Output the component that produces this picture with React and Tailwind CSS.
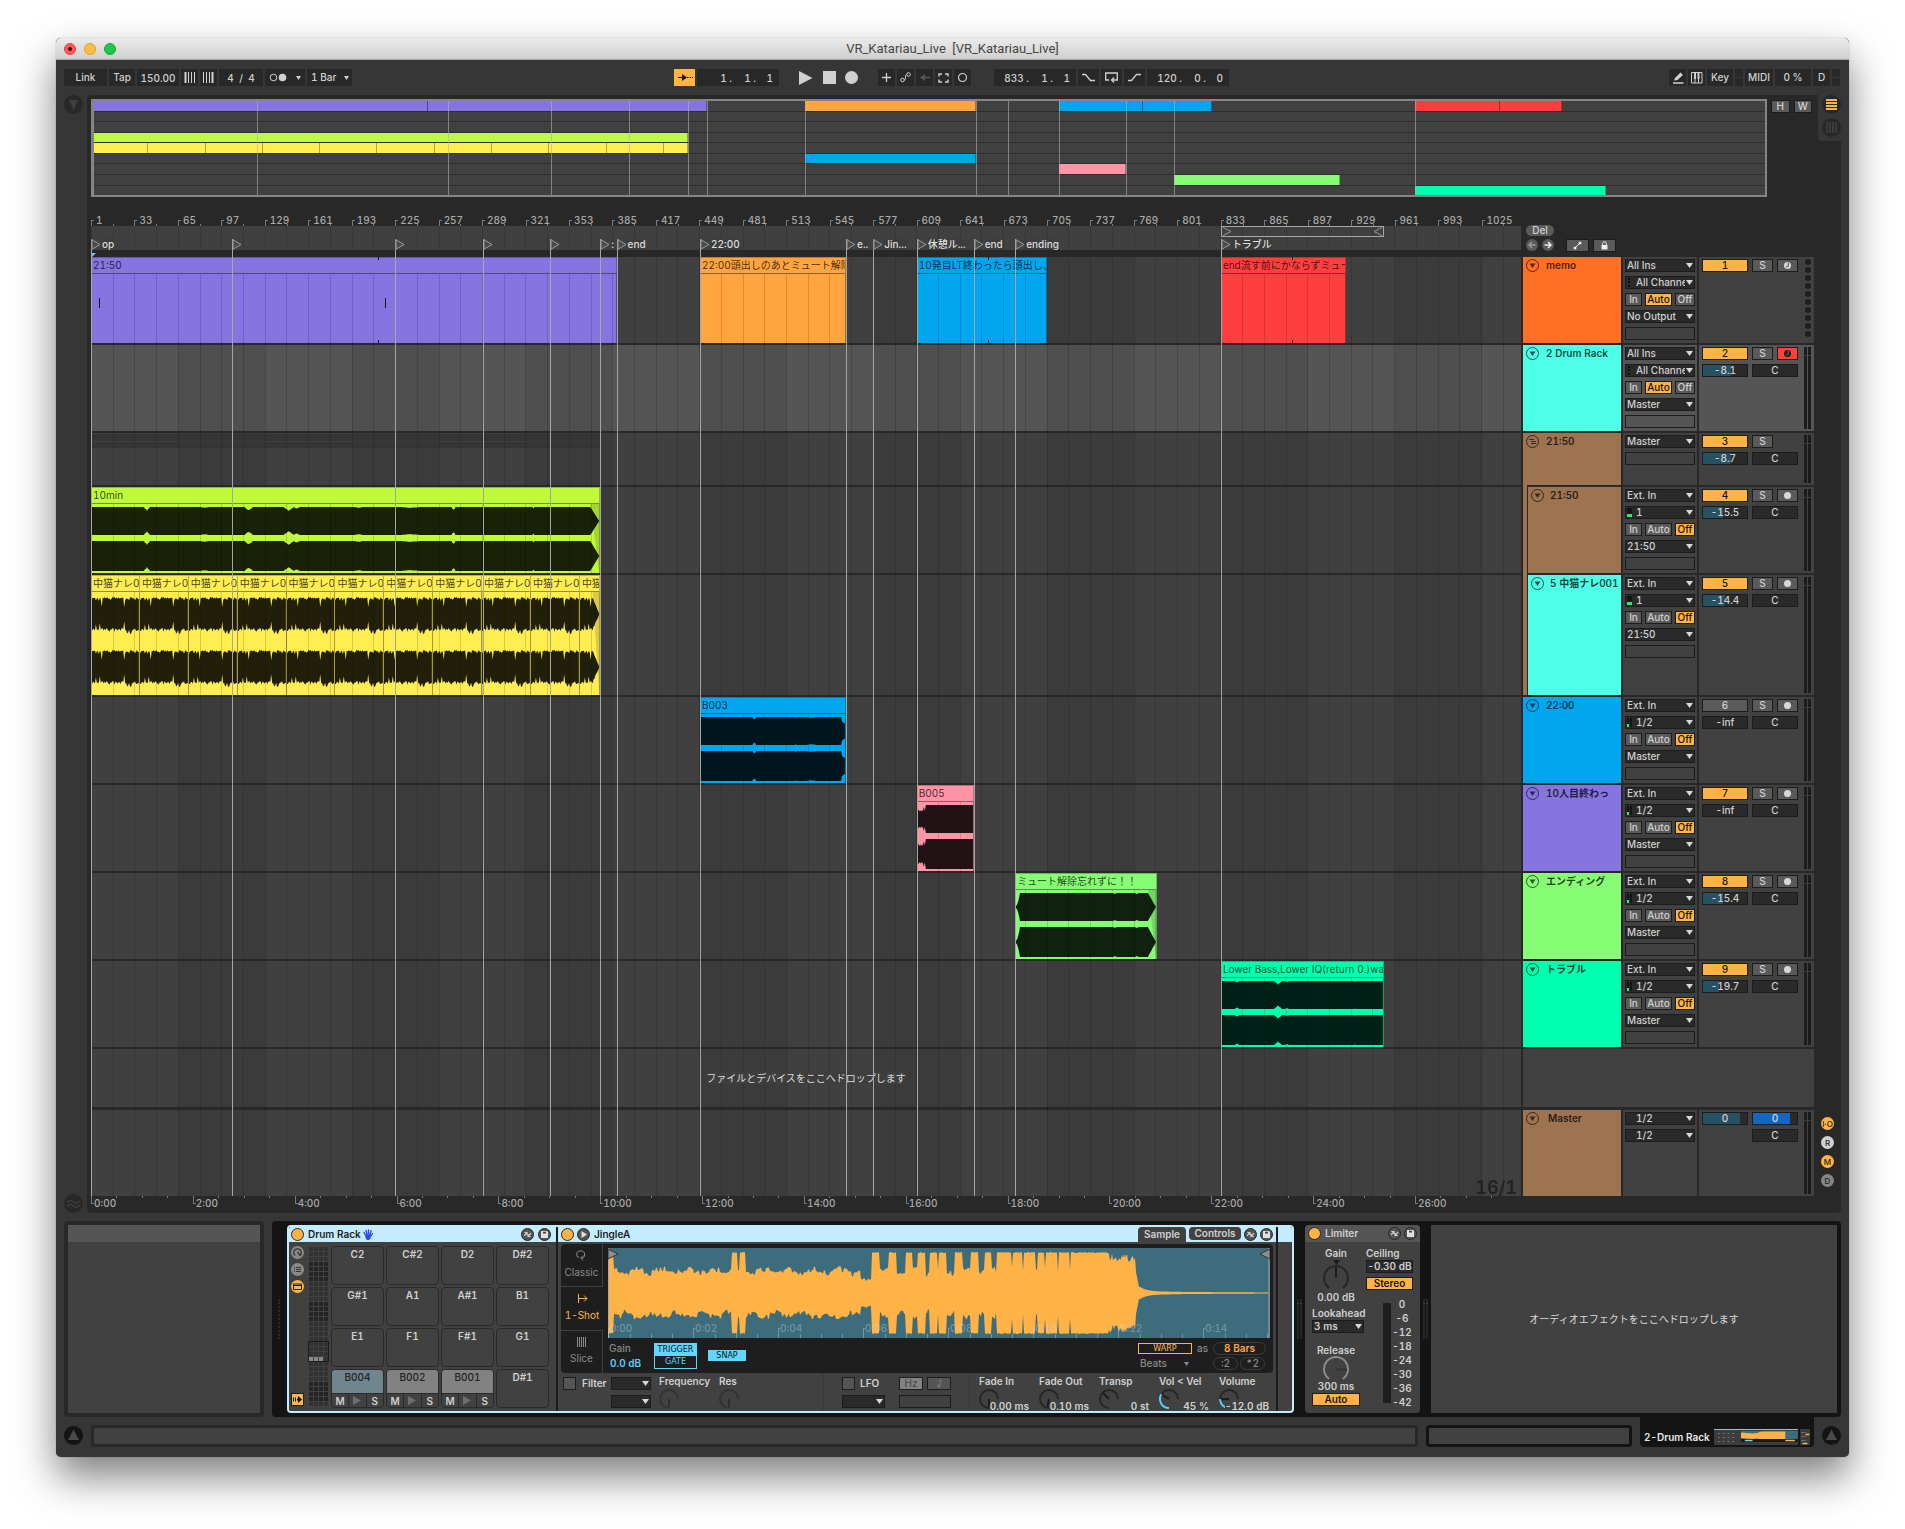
import { useState } from 'react'

const TOTAL_BARS = 1053

const pct = bars => `${(bars / TOTAL_BARS) * 100}%`

const LOCATORS = [
  { bar: 1, name: 'op' },
  { bar: 105, name: '' },
  { bar: 225, name: '' },
  { bar: 290, name: '' },
  { bar: 339, name: '' },
  { bar: 376, name: ':' },
  { bar: 388, name: 'end' },
  { bar: 449.5, name: '22:00' },
  { bar: 557, name: 'e..' },
  { bar: 577, name: 'Jin...' },
  { bar: 609, name: '休憩ル...' },
  { bar: 651, name: 'end' },
  { bar: 681.5, name: 'ending' },
  { bar: 833, name: 'トラブル' },
]

// the narration clip is 36 bars long and repeats until the end of the section
const NARRATION = Array.from({ length: 11 }, (_, i) => ({
  start: 1 + 36 * i,
  end: Math.min(1 + 36 * (i + 1), 376),
  label: i === 10 ? '中猫' : '中猫ナレ0',
  color: 'bg-[#ffee50]',
  wave: { kind: 'spiky', w: i === 10 ? 20 : 49, fadeOut: i === 10 ? 7 : 0 },
}))

const TRACKS = [
  {
    id: 1, name: 'memo', color: 'bg-[#ff7026]', height: 'h-[86px]', type: 'midi', output: 'No Output', on: true,
    clips: [
      { start: 1, end: 388, label: '21:50', color: 'bg-[#8675e0]', ticks: [212], notes: [7, 217.5] },
      { start: 449.5, end: 557, label: '22:00頭出しのあとミュート解除', color: 'bg-[#ffa43f]' },
      { start: 609, end: 705, label: '10発目LT終わったら頭出し、', color: 'bg-[#00a7ee]', ticks: [661.5] },
      { start: 833, end: 925, label: 'end流す前にかならずミュート', color: 'bg-[#ff3f3f]', ticks: [885.5] },
    ],
  },
  { id: 2, name: '2 Drum Rack', color: 'bg-[#4effe8]', height: 'h-[86px]', type: 'midi', output: 'Master', on: true, armed: true, selected: true, vol: '-8.1', fill: 64, clips: [] },
  { id: 3, name: '21:50', color: 'bg-[#9d7350]', height: 'h-[52px]', type: 'group', output: 'Master', on: true, vol: '-8.7', fill: 64, clips: [] },
  {
    id: 4, name: '21:50', color: 'bg-[#9d7350]', height: 'h-[86px]', type: 'audio', child: true, input: '1', output: '21:50', on: true, vol: '-15.5', fill: 46,
    clips: [{
      start: 1, end: 376, label: '10min', color: 'bg-[#bffb3b]',
      wave: { w: 509, fadeOut: 9, dips: [[56, 3, 4], [158, 4, 4], [198, 5, 4], [206, 3, 2], [268, 4, 1], [363, 2, 4], [443, 1, 2], [114, 4, 1], [320, 10, 1]] },
    }],
  },
  { id: 5, name: '5 中猫ナレ001', color: 'bg-[#4effe8]', height: 'h-[120px]', type: 'audio', child: true, input: '1', output: '21:50', on: true, vol: '-14.4', fill: 49, clips: NARRATION },
  {
    id: 6, name: '22:00', color: 'bg-[#00a7ee]', height: 'h-[86px]', type: 'audio', input: '1/2', output: 'Master', on: false, vol: '-inf', fill: 0,
    clips: [{ start: 449.5, end: 557, label: 'B003', color: 'bg-[#00a7ee]', wave: { w: 147, tail: 4, dips: [[55, 2, 3], [97, 1, 1], [113, 5, 1]] } }],
  },
  {
    id: 7, name: '10人目終わっ', color: 'bg-[#8675e0]', height: 'h-[86px]', type: 'audio', input: '1/2', output: 'Master', on: true, vol: '-inf', fill: 0,
    clips: [{ start: 609, end: 651, label: 'B005', color: 'bg-[#ff94a5]', wave: { w: 57, intro: 9, dips: [] } }],
  },
  {
    id: 8, name: 'エンディング', color: 'bg-[#87fc75]', height: 'h-[86px]', type: 'audio', input: '1/2', output: 'Master', on: true, vol: '-15.4', fill: 46,
    clips: [{ start: 681.5, end: 786, label: 'ミュート解除忘れずに！！', color: 'bg-[#87fc75]', wave: { w: 141, fadeIn: 5, fadeOut: 8, dips: [[100, 2, 1], [122, 2, 1]] } }],
  },
  {
    id: 9, name: 'トラブル', color: 'bg-[#00ffae]', height: 'h-[86px]', type: 'audio', input: '1/2', output: 'Master', on: true, vol: '-19.7', fill: 37,
    clips: [{ start: 833, end: 953, label: 'Lower Bass,Lower IQ(return 0.)wav', color: 'bg-[#00ffae]', wave: { w: 162, dips: [[57, 4, 4], [16, 2, 2], [66, 2, 1], [134, 1, 1]] } }],
  },
]

/* ---------- wave shapes ---------- */

function noise(i, seed) {
  return Math.abs(Math.sin(i * 12.9898 + seed * 78.233) * 43758.5453) % 1
}

function outline(w, topAt, bottomAt) {
  const up = []
  const down = []
  for (let x = 0; x <= w; x++) {
    up.push(`${x} ${topAt(x).toFixed(1)}`)
    down.unshift(`${x} ${bottomAt(x).toFixed(1)}`)
  }
  return `M${up.join('L')}L${down.join('L')}Z`
}

const SPIKE_TOP = { 0: 2, 5: 2, 8: 3, 11: 9, 20: 1, 34: 9, 35: 3, 39: 2, 45: 3, 48: 1 }
const SPIKE_BOTTOM = { 5: -5, 9: -6, 15: 1, 19: 2, 24: 2, 34: -7, 37: 3, 38: 3, 40: 4, 41: 4, 46: 2 }

function channelPath(wave, top, bottom) {
  const mid = (top + bottom) / 2
  const half = (bottom - top) / 2
  const level = x => {
    let a = 1
    if (wave.fadeOut && x > wave.w - wave.fadeOut) a = (wave.w - x) / wave.fadeOut
    if (wave.fadeIn && x < wave.fadeIn) a = Math.max(0.08, (x / wave.fadeIn) ** 2)
    if (wave.tail && x > wave.w - wave.tail) a = 0.72 - (x - wave.w + wave.tail) * 0.05
    if (wave.intro && x < wave.intro) a = 0.5 + noise(x, 3) * 0.4
    return a
  }
  const dip = x => (wave.dips || []).reduce((d, [at, size, depth]) => (
    Math.abs(x - at) < size ? Math.max(d, depth * (1 - Math.abs(x - at) / (size + 1)) * (0.6 + noise(x, at) * 0.4)) : d
  ), 0)
  if (wave.kind === 'spiky') {
    return outline(wave.w,
      x => mid - (half - (SPIKE_TOP[x] || 0) + noise(x, 1) * 2) * level(x),
      x => mid + (half + (SPIKE_BOTTOM[x] || 0) + noise(x, 2) * 3 - 1) * level(x))
  }
  return outline(wave.w, x => mid - (half - dip(x)) * level(x), x => mid + (half - dip(x)) * level(x))
}

function ClipWave({ wave }) {
  const spiky = wave.kind === 'spiky'
  const h = spiky ? 103 : 69
  const [a, b] = spiky ? [[7, 37], [60, 90]] : [[3, 31], [37, 67]]
  return (
    <svg viewBox={`0 0 ${wave.w} ${h}`} preserveAspectRatio="none" className="relative z-20 block h-full w-full" aria-hidden="true">
      {wave.fadeOut > 0 && <path d={`M${wave.w - wave.fadeOut} 0H${wave.w}V${h}Z`} fill="#000" opacity=".15" />}
      <path d={channelPath(wave, a[0], a[1])} fill="#000" opacity=".87" />
      <path d={channelPath(wave, b[0], b[1])} fill="#000" opacity=".87" />
    </svg>
  )
}

// kick hits of the jingle, as [from, to] on a 662 wide scale
const HITS = [[1, 5], [124, 129], [132, 137], [264, 271], [281, 288], [298, 304], [310, 317], [322, 329], [331, 338], [347, 354], [363, 370], [377, 383], [389, 396], [397, 403], [405, 414], [416, 427], [430, 436], [438, 449], [451, 461], [463, 500]]

function jingleLevel(x, seed) {
  if (HITS.some(([from, to]) => x >= from && x <= to)) return 40 + noise(x, seed) * 1
  if (x > 660) return 0
  if (x > 531) return 5 * Math.exp(-(x - 531) / 6) + 0.5 + 1.5 * Math.exp(-(x - 531) / 50)
  if (x > 527) return 26 - (x - 527) * 5
  if (x > 500) return 31 + noise(x, seed) * 9
  if (x > 252 && x < 264) return 12 + noise(x, seed) * 3
  const swell = Math.abs(Math.sin(x / 8 + seed)) * 5
  return 16 + swell + noise(Math.floor(x / 2), seed) * 6
}

const JINGLE = outline(662, x => 45 - jingleLevel(x, 1), x => 45 + jingleLevel(x, 4))

/* ---------- small parts ---------- */

function Triangle({ className = '' }) {
  return (
    <svg viewBox="0 0 7 5" className={`h-[5px] w-[7px] ${className}`} aria-hidden="true">
      <path d="M0 0h7L3.5 5z" fill="currentColor" />
    </svg>
  )
}

function Chooser({ label, options, width = 'w-full', indent = '' }) {
  return (
    <div className={`relative h-[13px] ${width}`}>
      <select aria-label={label} className={`block h-[13px] w-full appearance-none overflow-hidden border border-[#1c1c1c] bg-[#2a2a2a] pr-[9px] leading-[11px] text-clip whitespace-nowrap text-[#d0d0d0] ${indent || 'pl-px'}`}>
        {options.map(o => <option key={o}>{o}</option>)}
      </select>
      <Triangle className="pointer-events-none absolute top-1 right-[2px] text-[#d8d8d8]" />
    </div>
  )
}

function ToolButton({ label, width = 'w-[17px]', children, className = 'bg-[#282828] text-[#d0d0d0]' }) {
  return (
    <button type="button" aria-label={label} className={`flex h-[17px] shrink-0 items-center justify-center ${width} ${className}`}>
      {children}
    </button>
  )
}

function Position({ label, values }) {
  const widths = ['w-[34px]', 'w-6', 'w-[17px]']
  return (
    <div role="group" aria-label={label} className="flex h-[17px] w-[82px] shrink-0 bg-[#282828] pl-px">
      {values.map((v, i) => (
        <input key={i} aria-label={`${label} ${i + 1}`} defaultValue={v} className={`h-[17px] bg-transparent text-right outline-none ${widths[i]}`} />
      ))}
    </div>
  )
}

function point(c, r, deg) {
  const rad = (deg * Math.PI) / 180
  return `${(c + r * Math.sin(rad)).toFixed(2)} ${(c - r * Math.cos(rad)).toFixed(2)}`
}

function arc(c, r, from, to) {
  return `M${point(c, r, from)}A${r} ${r} 0 ${to - from > 180 ? 1 : 0} 1 ${point(c, r, to)}`
}

function Knob({ size, start, sweep, value, track = '#262626', needle = '#1c1c1c', lit, className = '' }) {
  const c = size / 2
  const at = start + sweep * value
  return (
    <svg width={size} height={size} viewBox={`0 0 ${size} ${size}`} fill="none" strokeWidth="2" className={`shrink-0 ${className}`} aria-hidden="true">
      <path d={arc(c, c - 1, start, start + sweep)} stroke={track} />
      {lit && <path d={arc(c, c - 1, start, at)} stroke="#5bd0f7" />}
      <path d={`M${c} ${c}L${point(c, c - 2, at)}`} stroke={needle} />
    </svg>
  )
}

function HotSwap() {
  return (
    <button type="button" aria-label="Hot-swap" className="size-[13px] shrink-0">
      <svg viewBox="0 0 13 13" aria-hidden="true">
        <circle cx="6.5" cy="6.5" r="6" fill="#555" stroke="#262626" />
        <path d="M3 7.8 5.6 5M3.4 4.500H6V7M10 5.200 7.400 8M9.600 8.500H7V6" fill="none" stroke="#d0d0d0" strokeWidth="1.200" />
      </svg>
    </button>
  )
}

function SaveDisk() {
  return (
    <button type="button" aria-label="Save preset" className="size-[13px] shrink-0">
      <svg viewBox="0 0 13 13" aria-hidden="true">
        <circle cx="6.5" cy="6.5" r="6" fill="#555" stroke="#262626" />
        <path d="M3 3h6l1 1v6H3z" fill="#e0e0e0" />
        <path d="M5 3.800h3v1.700H5z" fill="#444" />
      </svg>
    </button>
  )
}

function PowerDot({ label }) {
  return <button type="button" aria-label={label} className="size-[13px] shrink-0 rounded-full border border-[#262626] bg-[#ffb347]" />
}

function RoundIcon({ label, children, dark = 'fill-[#282828]' }) {
  return (
    <button type="button" aria-label={label} className="size-[19px] shrink-0">
      <svg viewBox="0 0 19 19" aria-hidden="true">
        <circle cx="9.5" cy="9.5" r="9.5" className={dark} />
        {children}
      </svg>
    </button>
  )
}

/* ---------- top ---------- */

function TitleBar() {
  return (
    <header className="flex h-[22px] items-center border-b border-[#a9a9a9] bg-gradient-to-b from-[#ebebeb] to-[#cfcfcf] px-2">
      <div className="flex w-[60px] gap-2">
        <button type="button" aria-label="Close" className="flex size-3 items-center justify-center rounded-full border border-[#e0443e] bg-[#fc5b57]">
          <span className="size-1 rounded-full bg-[#4d0000]" />
        </button>
        <button type="button" aria-label="Minimise" className="size-3 rounded-full border border-[#dfa023] bg-[#fdbd41]" />
        <button type="button" aria-label="Zoom" className="size-3 rounded-full border border-[#14a832] bg-[#1ec84c]" />
      </div>
      <h1 className="flex-1 text-center font-[Roboto,sans-serif] text-[13px] font-normal whitespace-pre text-[#474747]">VR_Katariau_Live  [VR_Katariau_Live]</h1>
      <div className="w-[60px]" />
    </header>
  )
}

function Toolbar() {
  const [playing, setPlaying] = useState(false)
  return (
    <div className="flex gap-[2px] pt-[9px] pr-[9px] pb-[9px] pl-2 text-[#d0d0d0]">
      <ToolButton label="Link" width="w-[43px]">Link</ToolButton>
      <ToolButton label="Tap tempo" width="w-[26px]">Tap</ToolButton>
      <input aria-label="Tempo" defaultValue="150.00" className="h-[17px] w-[42px] shrink-0 bg-[#282828] text-center" />
      <ToolButton label="Nudge down">
        <svg width="11" height="11" stroke="currentColor" aria-hidden="true"><path d="M1.500 0v11" strokeWidth="2" /><path d="M4.500 0v11M7.500 0v11M10.500 0v11" /></svg>
      </ToolButton>
      <ToolButton label="Nudge up">
        <svg width="11" height="11" stroke="currentColor" aria-hidden="true"><path d="M.5 0v11M3.500 0v11M6.500 0v11" /><path d="M9.500 0v11" strokeWidth="2" /></svg>
      </ToolButton>
      <input aria-label="Time signature" defaultValue="4  /  4" className="h-[17px] w-11 shrink-0 bg-[#282828] text-center" />
      <ToolButton label="Metronome" width="w-10">
        <svg width="32" height="9" aria-hidden="true">
          <circle cx="4.500" cy="4.500" r="3.300" fill="none" stroke="currentColor" />
          <circle cx="13.500" cy="4.500" r="3.800" fill="currentColor" />
          <path d="M27 3h5l-2.500 4z" fill="currentColor" />
        </svg>
      </ToolButton>
      <div className="relative h-[17px] w-[45px] shrink-0">
        <select aria-label="Quantization" className="block h-[17px] w-full appearance-none bg-[#282828] pl-1 leading-[17px]">
          <option>1 Bar</option>
        </select>
        <svg width="5" height="4" className="pointer-events-none absolute top-[7px] right-[3px]" aria-hidden="true"><path d="M0 0h5L2.500 4z" fill="currentColor" /></svg>
      </div>

      <div className="flex-[318]" />

      <ToolButton label="Follow" width="w-[21px]" className="bg-[#ffb347] text-[#141414]">
        <svg width="17" height="9" aria-hidden="true"><path d="M6 1v7l5-3.500z" fill="currentColor" /><path d="M2 4.500h5M11 4.500h1.500M13.500 4.500H15M16 4.500h1" stroke="currentColor" /></svg>
      </ToolButton>
      <Position label="Arrangement position" values={['1 .', '1 .', '1']} />
      <div className="flex w-[95px] shrink-0 items-center pl-[18px]">
        <button type="button" aria-label="Play" aria-pressed={playing} onClick={() => setPlaying(!playing)} className="w-6">
          <svg width="14" height="14" aria-hidden="true"><path d="M0 0l13.500 7L0 14z" fill="currentColor" /></svg>
        </button>
        <button type="button" aria-label="Stop" onClick={() => setPlaying(false)} className="w-[22px]">
          <span className="block size-[13px] bg-[#d0d0d0]" />
        </button>
        <button type="button" aria-label="Record" className="size-[13px] rounded-full bg-[#d0d0d0]" />
      </div>
      <ToolButton label="MIDI overdub">
        <svg width="11" height="11" aria-hidden="true"><path d="M5.500 1v9M1 5.500h9" stroke="currentColor" strokeWidth="1.300" /></svg>
      </ToolButton>
      <ToolButton label="Automation arm">
        <svg width="11" height="11" fill="none" stroke="currentColor" aria-hidden="true"><circle cx="2.500" cy="8" r="1.800" /><circle cx="8.500" cy="2.500" r="1.800" /><path d="M4.300 8C7 8 4 2.500 6.700 2.500" /></svg>
      </ToolButton>
      <ToolButton label="Re-enable automation" className="bg-[#282828] text-[#555]">
        <svg width="10" height="9" aria-hidden="true"><path d="M0 4.500 5 1v7zM4 3.800h6v1.400H4z" fill="currentColor" /></svg>
      </ToolButton>
      <ToolButton label="Capture MIDI">
        <svg width="11" height="10" fill="none" stroke="currentColor" strokeWidth="1.400" aria-hidden="true"><path d="M4 1H1v2.500M7 1h3v2.500M4 9H1V6.500M7 9h3V6.500" /></svg>
      </ToolButton>
      <ToolButton label="Session record">
        <svg width="11" height="11" aria-hidden="true"><circle cx="5.500" cy="5.500" r="4" fill="none" stroke="currentColor" strokeWidth="1.200" /></svg>
      </ToolButton>
      <div className="w-[19px] shrink-0" />
      <Position label="Loop start" values={['833 .', '1 .', '1']} />
      <ToolButton label="Punch in" width="w-[21px]">
        <svg width="13" height="9" fill="none" stroke="currentColor" strokeWidth="1.300" aria-hidden="true"><path d="M0 1.500h3.500l5 6H13" /></svg>
      </ToolButton>
      <ToolButton label="Loop" width="w-[21px]">
        <svg width="13" height="11" fill="none" stroke="currentColor" strokeWidth="1.300" aria-hidden="true"><path d="M4 8H.7V1h11.600v7H7" /><path d="M9 5.500 6.500 8 9 10.500" /></svg>
      </ToolButton>
      <ToolButton label="Punch out" width="w-[21px]">
        <svg width="13" height="9" fill="none" stroke="currentColor" strokeWidth="1.300" aria-hidden="true"><path d="M0 7.500h3.500l5-6H13" /></svg>
      </ToolButton>
      <Position label="Loop length" values={['120 .', '0 .', '0']} />

      <div className="flex-[436]" />

      <ToolButton label="Draw mode">
        <svg width="12" height="12" aria-hidden="true"><path d="M2 8.500 3 6l5.500-5.500L11 3 5.500 8z" fill="currentColor" /><path d="M1 11h10.500" stroke="currentColor" strokeWidth="1.300" /></svg>
      </ToolButton>
      <ToolButton label="Computer MIDI keyboard">
        <svg width="12" height="12" fill="none" stroke="currentColor" aria-hidden="true"><path d="M.5.5h10.500v10.500H.5zM4 7v4M7.500 7v4" /><path d="M4 1v6M7.500 1v6" strokeWidth="2" /></svg>
      </ToolButton>
      <ToolButton label="Key map" width="w-[26px]">Key</ToolButton>
      <div className="flex h-[17px] w-2 shrink-0 items-center bg-[#282828]"><span className="h-px w-full bg-[#363636]" /></div>
      <ToolButton label="MIDI map" width="w-7">MIDI</ToolButton>
      <output aria-label="CPU load" className="h-[17px] w-9 shrink-0 bg-[#282828] text-center leading-[17px]">0 %</output>
      <ToolButton label="Disk overload">D</ToolButton>
      <div className="flex h-[17px] w-2 shrink-0 items-center bg-[#282828]"><span className="h-px w-full bg-[#363636]" /></div>
    </div>
  )
}

function Overview() {
  return (
    <div className="relative h-[98px] overflow-hidden bg-[#2d2d2d] py-[2px]">
      <div className="flex h-full flex-col gap-px">
        {TRACKS.map(t => (
          <div key={t.id} className="relative min-h-0 flex-1 bg-[#414141]">
            {t.clips.map(c => (
              <div key={c.start} className={`absolute inset-y-0 border-r border-black/30 ${c.color}`} style={{ left: pct(c.start - 1), width: pct(c.end - c.start) }} />
            ))}
            {t.clips.flatMap(c => c.ticks || []).map(n => (
              <span key={n} className="absolute inset-y-0 w-px bg-black/40" style={{ left: pct(n - 1) }} />
            ))}
          </div>
        ))}
      </div>
      {LOCATORS.slice(1).map(l => (
        <span key={l.bar} className="absolute inset-y-0 w-px bg-[#b0b0b0]/60" style={{ left: pct(l.bar - 1) }} />
      ))}
      <div className="absolute inset-0 border-2 border-l-[3px] border-[#858585]" />
    </div>
  )
}

/* ---------- timeline ---------- */

function GridLines() {
  return (
    <div className="pointer-events-none absolute inset-0 z-10 flex overflow-hidden" aria-hidden="true">
      {Array.from({ length: 66 }, (_, i) => (
        <span key={i} className="shrink-0 border-l border-black/15" style={{ width: pct(16) }} />
      ))}
    </div>
  )
}

function BeatRuler() {
  return (
    <div className="flex h-[13px] overflow-hidden text-[#a9a9a9]">
      {Array.from({ length: 33 }, (_, i) => (
        <div key={i} className="flex shrink-0 items-end" style={{ width: pct(32) }}>
          <span className="h-[6px] w-[3px] shrink-0 border-t border-l border-[#7a7a7a]" />
          <span className="w-0 pl-[2px] leading-3">{1 + 32 * i}</span>
          <span className="ml-auto h-[2px] w-1/2 border-l border-[#7a7a7a]" />
        </div>
      ))}
    </div>
  )
}

function TimeRuler() {
  return (
    <div className="flex h-[17px] overflow-hidden text-[#a9a9a9]">
      {Array.from({ length: 14 }, (_, i) => (
        <div key={i} className="relative flex shrink-0 items-start" style={{ width: pct(75) }}>
          <span className="h-2 w-[3px] shrink-0 border-b border-l border-[#7a7a7a]" />
          <span className="leading-[15px]">{2 * i}:00</span>
          {[25, 50, 75].map(n => <span key={n} className="absolute top-0 h-[2px] w-px bg-[#7a7a7a]" style={{ left: `${n}%` }} />)}
        </div>
      ))}
    </div>
  )
}

function Flag() {
  return (
    <svg width="10" height="11" className="shrink-0" aria-hidden="true">
      <path d="M1 .8 9 5.500 1 10.200z" fill="#4a4a4a" stroke="#9a9a9a" />
    </svg>
  )
}

function LocatorStrip() {
  return (
    <div className="relative h-6 bg-[#404040]">
      <GridLines />
      <div className="absolute top-0 z-20 flex h-[11px] items-center justify-between border border-[#a9a9a9]" style={{ left: pct(832), width: pct(120) }}>
        <svg width="10" height="9" fill="none" stroke="#9a9a9a" aria-hidden="true"><path d="M1 .5 9 4.500 1 8.500" /></svg>
        <svg width="10" height="9" fill="none" stroke="#9a9a9a" aria-hidden="true"><path d="M9 .5 1 4.500 9 8.500" /></svg>
      </div>
      {LOCATORS.map(l => (
        <div key={l.bar} className="absolute bottom-0 z-20 flex h-[11px] items-center" style={{ left: pct(l.bar - 1) }}>
          <Flag />
          {l.name && <span className="ml-px h-[11px] bg-[#3c3c3c] leading-[11px] whitespace-nowrap text-[#dcdcdc]">{l.name}</span>}
        </div>
      ))}
    </div>
  )
}

function Clip({ clip }) {
  return (
    <div className="absolute inset-y-0 flex flex-col" style={{ left: pct(clip.start - 1), width: pct(clip.end - clip.start) }}>
      <div className={`absolute inset-0 ${clip.color}`} />
      <div className={`relative z-20 h-[17px] shrink-0 overflow-hidden border-y border-r border-t-black/25 border-r-black/25 border-b-black/40 pl-[2px] leading-[15px] font-normal whitespace-nowrap text-black/75 ${clip.color}`}>
        {clip.label}
      </div>
      <div className="relative z-20 min-h-0 flex-1 border-r border-black/35">
        {clip.wave && <ClipWave wave={clip.wave} />}
      </div>
      {(clip.ticks || []).map(t => (
        <span key={t} className="absolute inset-y-0 z-20 flex w-px flex-col justify-between" style={{ left: `${((t - clip.start) / (clip.end - clip.start)) * 100}%` }}>
          <i className="h-[3px] bg-[#111]" />
          <i className="h-[3px] bg-[#111]" />
        </span>
      ))}
      {(clip.notes || []).map(n => (
        <span key={n} className="absolute top-[41px] z-20 h-[10px] w-px bg-[#111]" style={{ left: `${((n - clip.start) / (clip.end - clip.start)) * 100}%` }} />
      ))}
    </div>
  )
}

function Shading() {
  return (
    <div className="absolute inset-0 flex overflow-hidden" aria-hidden="true">
      {Array.from({ length: 17 }, (_, i) => (
        <span key={i} className={`shrink-0 ${i % 2 ? 'bg-black/7' : ''}`} style={{ width: pct(64) }} />
      ))}
    </div>
  )
}

function Timeline() {
  return (
    <div className="min-w-0 flex-1">
      <BeatRuler />
      <div className="relative">
        <LocatorStrip />
        <div className="h-[7px] pt-[3px] pl-px">
          <svg width="5" height="4" aria-hidden="true"><path d="M0 0h4L0 4z" fill="#5bd0f7" /></svg>
        </div>
        <div className="relative isolate flex flex-col gap-[2px]">
          {TRACKS.map(t => (
            <div key={t.id} className={`relative ${t.height} ${t.selected ? 'bg-[#555]' : 'bg-[#404040]'}`}>
              <Shading />
              {t.type === 'group' && (
                <div className="relative flex flex-col gap-px pt-px" style={{ width: pct(375) }}>
                  <span className="h-[7px] bg-[#353535]" />
                  <span className="h-[6px] bg-[#353535]" />
                </div>
              )}
              {t.clips.map(c => <Clip key={c.start} clip={c} />)}
            </div>
          ))}
          <div className="relative h-[58px] bg-[#404040]">
            <Shading />
            <p className="relative z-20 pt-[21px] text-center leading-4 font-normal text-[#dcdcdc]">
              <span className="bg-[#3e3e3e]">ファイルとデバイスをここへドロップします</span>
            </p>
          </div>
          <div className="relative mt-px h-[86px] bg-[#404040]">
            <Shading />
            <span className="absolute right-1 bottom-0 z-20 text-lg leading-4 font-semibold text-[#222]">16/1</span>
          </div>
          <GridLines />
        </div>
        <div className="pointer-events-none absolute inset-x-0 top-[13px] bottom-0" aria-hidden="true">
          {LOCATORS.map(l => (
            <span key={l.bar} className="absolute inset-y-0 w-px bg-[#a6a6a6]" style={{ left: pct(l.bar - 1) }} />
          ))}
        </div>
      </div>
      <TimeRuler />
    </div>
  )
}

/* ---------- track headers and mixer ---------- */

function FoldIcon({ group }) {
  return (
    <svg viewBox="0 0 13 13" className="size-[13px] shrink-0" fill="none" stroke="#000" strokeOpacity=".65" aria-hidden="true">
      <circle cx="6.500" cy="6.500" r="6" />
      {group ? <path d="M3 4.500h5M5 6.500h5M5 8.500h5" /> : <path d="M3.500 4.600h6L6.500 9z" fill="#000" fillOpacity=".65" stroke="none" />}
    </svg>
  )
}

function MonitorButtons({ type, id }) {
  const active = type === 'midi' ? 'Auto' : 'Off'
  const widths = { In: 'w-[17px]', Auto: 'w-[27px]', Off: 'w-5' }
  return (
    <div className="flex justify-between" role="group" aria-label={`Monitor ${id}`}>
      {['In', 'Auto', 'Off'].map(m => (
        <button key={m} type="button" className={`flex h-[13px] items-center justify-center border border-[#1c1c1c] ${widths[m]} ${m === active ? 'bg-[#ffb347] text-[#141414]' : 'bg-[#5a5a5a] text-[#d0d0d0]'}`}>{m}</button>
      ))}
    </div>
  )
}

function ChannelMeter({ input }) {
  if (!input) return <span className="pointer-events-none absolute top-[2px] left-[3px] h-[9px] border-l-2 border-dotted border-[#111]" />
  return (
    <span className="pointer-events-none absolute top-[2px] left-[2px] flex h-[9px] items-end gap-px">
      {input === '1'
        ? <i className="flex h-[9px] w-[5px] items-end bg-[#151515]"><b className="h-[3px] w-full bg-[#2bef6b]" /></i>
        : <><i className="flex h-[9px] w-[2px] items-end bg-[#151515]"><b className="h-[3px] w-full bg-[#2bef6b]" /></i><i className="h-[9px] w-[2px] bg-[#151515]" /></>}
    </span>
  )
}

function RoutingCell({ track }) {
  const empty = <div className="h-[13px] border border-[#1c1c1c]" />
  const bg = track.selected ? 'bg-[#555]' : 'bg-[#414141]'
  return (
    <div className={`flex w-[74px] shrink-0 flex-col gap-1 p-[2px] ${bg}`}>
      {track.type !== 'group' && (
        <>
          <Chooser label={`Input type ${track.id}`} options={[track.type === 'midi' ? 'All Ins' : 'Ext. In']} />
          <div className="relative">
            <Chooser label={`Input channel ${track.id}`} options={[track.input || 'All Channels']} indent="pl-[10px]" />
            <ChannelMeter input={track.input} />
          </div>
          <MonitorButtons type={track.type} id={track.id} />
        </>
      )}
      <Chooser label={`Output ${track.id}`} options={[track.output]} />
      {empty}
    </div>
  )
}

function ArmIcon({ midi }) {
  return (
    <svg width="9" height="9" aria-hidden="true">
      <circle cx="4.500" cy="4.500" r="3.500" fill="currentColor" />
      {midi && <path d="M5.300 1.500v4M3 6.300l2-1" fill="none" stroke="#666" strokeWidth="1.200" />}
    </svg>
  )
}

function Meter() {
  return (
    <div className="flex h-full gap-px" aria-hidden="true">
      {[0, 1].map(n => (
        <span key={n} className="w-[3px] bg-[#1c1c1c] pt-2"><i className="block h-px bg-[#3c3c3c]" /></span>
      ))}
    </div>
  )
}

function Value({ label, value, fill = 0, blue }) {
  const tint = blue ? '#1566c0' : '#265262'
  return (
    <input
      aria-label={label}
      defaultValue={value}
      className="h-[13px] w-[46px] border border-[#1c1c1c] bg-[#2a2a2a] text-center text-[#d0d0d0]"
      style={{ backgroundImage: `linear-gradient(to right, ${tint} ${fill}%, transparent ${fill}%)` }}
    />
  )
}

function MixerCell({ track }) {
  const [on, setOn] = useState(track.on)
  const midi = track.type === 'midi'
  const bg = track.selected ? 'bg-[#555]' : 'bg-[#414141]'
  return (
    <div className={`flex w-[115px] shrink-0 justify-between py-[2px] pr-[3px] pl-[3px] ${bg}`}>
      <div className="flex flex-col gap-1">
        <div className="flex gap-1">
          <button type="button" aria-pressed={on} onClick={() => setOn(!on)} className={`h-[13px] w-[46px] border border-[#1c1c1c] leading-[11px] ${on ? 'bg-[#ffb347] text-[#141414]' : 'bg-[#5a5a5a] text-[#d0d0d0]'}`}>{track.id}</button>
          <button type="button" aria-label={`Solo ${track.id}`} className="h-[13px] w-[21px] border border-[#1c1c1c] bg-[#5a5a5a] leading-[11px] text-[#d0d0d0]">S</button>
          {track.type !== 'group' && (
            <button type="button" aria-label={`Arm ${track.id}`} className={`flex h-[13px] w-[21px] items-center justify-center border border-[#1c1c1c] ${track.armed ? 'bg-[#ff4136] text-[#1c1c1c]' : 'bg-[#5a5a5a] text-[#d8d8d8]'}`}>
              <ArmIcon midi={midi} />
            </button>
          )}
        </div>
        {track.vol && (
          <div className="flex gap-1">
            <Value label={`Volume ${track.id}`} value={track.vol} fill={track.fill} />
            <Value label={`Pan ${track.id}`} value="C" />
          </div>
        )}
      </div>
      {track.id === 1
        ? <div className="flex flex-col gap-[2px]">{Array.from({ length: 10 }, (_, i) => <span key={i} className="size-[6px] rounded-full bg-[#1e1e1e]" />)}</div>
        : <Meter />}
    </div>
  )
}

function TrackHeaders() {
  return (
    <div className="flex w-[291px] shrink-0 flex-col gap-[2px]">
      <div className="flex h-[42px] items-start gap-3 pt-3 pl-[3px]">
        <div className="flex flex-col gap-[3px]">
          <button type="button" className="h-[11px] w-7 rounded-full bg-[#5a5a5a] leading-[11px] text-[#d0d0d0]">Del</button>
          <div className="flex justify-between">
            <button type="button" aria-label="Previous locator" className="flex size-3 items-center justify-center rounded-full bg-[#5a5a5a] text-[#9a9a9a]">
              <svg width="8" height="8" fill="none" stroke="currentColor" strokeWidth="1.500" aria-hidden="true"><path d="M7.500 4H1.500M4 1 1 4l3 3" /></svg>
            </button>
            <button type="button" aria-label="Next locator" className="flex size-3 items-center justify-center rounded-full bg-[#5a5a5a] text-[#eee]">
              <svg width="8" height="8" fill="none" stroke="currentColor" strokeWidth="1.500" aria-hidden="true"><path d="M.5 4h6M4 1l3 3-3 3" /></svg>
            </button>
          </div>
        </div>
        <div className="flex gap-1 pt-[14px]">
          <button type="button" aria-label="Automation mode" className="flex h-[13px] w-[23px] items-center justify-center border border-[#1c1c1c] bg-[#5a5a5a] text-[#eee]">
            <svg width="9" height="9" aria-hidden="true"><circle cx="2" cy="7" r="1.500" fill="currentColor" /><circle cx="7" cy="2" r="1.500" fill="currentColor" /><path d="M2 7 7 2" stroke="currentColor" /></svg>
          </button>
          <button type="button" aria-label="Lock envelopes" className="flex h-[13px] w-[23px] items-center justify-center border border-[#1c1c1c] bg-[#5a5a5a] text-[#eee]">
            <svg width="9" height="9" aria-hidden="true"><path d="M1.500 4h6v4.500h-6z" fill="currentColor" /><path d="M2.700 4V2.500a1.800 1.800 0 0 1 3.600 0V4" fill="none" stroke="currentColor" /></svg>
          </button>
        </div>
      </div>
      {TRACKS.map(t => (
        <div key={t.id} className={`flex gap-[2px] ${t.height}`}>
          <div className="flex w-[98px] shrink-0">
            {t.child && <span className="-mt-[2px] mr-px w-1 shrink-0 bg-[#9d7350]" />}
            <div className={`flex min-w-0 flex-1 overflow-hidden pt-[2px] pl-[3px] font-semibold text-black/75 ${t.child ? 'gap-1.5' : 'gap-[7px]'} ${t.color}`}>
              <FoldIcon group={t.type === 'group'} />
              <span className="leading-[13px] whitespace-nowrap">{t.name}</span>
            </div>
          </div>
          <RoutingCell track={t} />
          <MixerCell track={t} />
        </div>
      ))}
      <div className="h-[58px] bg-[#414141]" />
      <div className="mt-px flex h-[86px] gap-[2px]">
        <div className="flex w-[98px] shrink-0 gap-[9px] bg-[#9d7350] pt-[2px] pl-[3px] font-semibold text-black/75">
          <FoldIcon />
          <span className="leading-[13px]">Master</span>
        </div>
        <div className="flex w-[74px] shrink-0 flex-col gap-1 bg-[#414141] p-[2px]">
          <Chooser label="Cue out" options={['1/2']} indent="pl-[10px]" />
          <Chooser label="Master out" options={['1/2']} indent="pl-[10px]" />
        </div>
        <div className="flex w-[115px] shrink-0 justify-between bg-[#414141] px-[3px] py-[2px]">
          <div className="flex flex-col items-end gap-1">
            <div className="flex gap-1">
              <Value label="Master volume" value="0" fill={85} />
              <Value label="Cue volume" value="0" fill={85} blue />
            </div>
            <Value label="Master pan" value="C" />
          </div>
          <Meter />
        </div>
      </div>
    </div>
  )
}

function SectionToggles() {
  const items = [
    ['I·O', 'bg-[#ffb347]'],
    ['R', 'bg-[#d0d0d0]'],
    ['M', 'bg-[#ffb347]'],
    ['D', 'bg-[#858585]'],
  ]
  return (
    <div className="flex w-[27px] shrink-0 flex-col justify-end gap-[6px] pb-[26px] pl-[7px]">
      {items.map(([name, bg]) => (
        <button key={name} type="button" className={`flex size-[13px] items-center justify-center rounded-full text-[8px] leading-none text-[#1c1c1c] ${bg}`}>{name}</button>
      ))}
    </div>
  )
}

function Arrangement() {
  return (
    <div className="flex pr-2 pl-2">
      <div className="flex w-[23px] shrink-0 flex-col justify-between">
        <RoundIcon label="Show browser"><path d="M5 5h9l-4.500 10z" fill="#3f3f3f" /></RoundIcon>
        <RoundIcon label="Groove pool"><path d="M3 8.500c2.500-3 4.500-2.500 6.500-.5s4 1.500 6.500-1M3 12.500c2.500-3 4.500-2.500 6.500-.5s4 1.500 6.500-1" fill="none" stroke="#3c3c3c" strokeWidth="1.500" /></RoundIcon>
      </div>
      <div className="relative min-w-0 flex-1 rounded bg-[#282828] pt-1 pl-1">
        <div className="flex pr-[29px]">
          <div className="min-w-0 flex-1"><Overview /></div>
          <div className="flex w-[45px] shrink-0 gap-1 pt-px pl-1">
            <button type="button" className="h-[13px] w-[19px] border border-[#1c1c1c] bg-[#5a5a5a] leading-[11px] text-[#d0d0d0]">H</button>
            <button type="button" className="h-[13px] w-[19px] border border-[#1c1c1c] bg-[#5a5a5a] leading-[11px] text-[#d0d0d0]">W</button>
          </div>
        </div>
        <div className="flex gap-[2px] pt-4">
          <Timeline />
          <div className="flex shrink-0">
            <TrackHeaders />
            <SectionToggles />
          </div>
        </div>
        <div className="absolute top-0 right-0 flex h-[46px] w-[23px] flex-col gap-1 rounded-bl bg-[#363636] pl-1">
          <RoundIcon label="Arrangement view"><path d="M4 5h11M4 8h11M4 11h11M4 14h11" stroke="#ffb347" strokeWidth="1.800" /></RoundIcon>
          <RoundIcon label="Session view"><path d="M5 4v11M8 4v11M11 4v11M14 4v11" stroke="#424242" strokeWidth="1.500" /></RoundIcon>
        </div>
      </div>
    </div>
  )
}

/* ---------- devices ---------- */

const PADS = ['C2', 'C#2', 'D2', 'D#2', 'G#1', 'A1', 'A#1', 'B1', 'E1', 'F1', 'F#1', 'G1', 'B004', 'B002', 'B001', 'D#1']

function PadMap() {
  const shade = row => ((row >= 3 && row <= 6) || (row >= 11 && row <= 14) || (row >= 27 && row <= 30) ? '#242424' : '#323232')
  return (
    <svg width="21" height="160" className="shrink-0" aria-hidden="true">
      {Array.from({ length: 128 }, (_, i) => {
        const row = Math.floor(i / 4)
        const lit = row === 22 && i % 4 < 3
        return <rect key={i} x={1 + (i % 4) * 5} y={1 + row * 5} width="4" height="4" fill={lit ? '#8a8a8a' : shade(row)} />
      })}
      <rect x=".5" y="95.5" width="20" height="20" fill="none" stroke="#1c1c1c" />
    </svg>
  )
}

function Pad({ name }) {
  if (!name.startsWith('B0')) {
    return <button type="button" className="flex h-[39px] w-[53px] justify-center rounded border border-[#2a2a2a] bg-[#414141] pt-px leading-[13px] font-semibold text-[#d0d0d0]">{name}</button>
  }
  const cell = 'flex items-center justify-center bg-[#414141] leading-3 font-semibold'
  return (
    <div className="flex h-[39px] w-[53px] flex-col gap-px overflow-hidden rounded border border-[#2a2a2a] bg-[#2a2a2a]">
      <button type="button" className={`h-[23px] shrink-0 pb-2 leading-[13px] text-[#222] ${name === 'B004' ? 'bg-[#6f868f]' : 'bg-[#828282]'}`}>{name}</button>
      <div className="grid flex-1 grid-cols-3 gap-px text-[#d0d0d0]">
        <button type="button" className={cell}>M</button>
        <button type="button" aria-label={`Play ${name}`} className={cell}>
          <svg width="8" height="9" aria-hidden="true"><path d="M0 0l8 4.500L0 9z" fill="#6e6e6e" /></svg>
        </button>
        <button type="button" className={cell}>S</button>
      </div>
    </div>
  )
}

function DrumRack() {
  return (
    <section aria-label="Drum Rack" className="flex w-[269px] shrink-0 flex-col border-r-2 border-[#1c1c1c] bg-[#414141]">
      <div className="flex h-[15px] items-center gap-1 bg-[#c3ecfd] pr-[5px] pl-[2px] text-[#1c1c1c]">
        <PowerDot label="Drum Rack on" />
        <h2 className="font-semibold">Drum Rack</h2>
        <svg width="10" height="11" className="-ml-[2px]" aria-hidden="true">
          <path d="M2.500 6 1 3.500M4 5.500 3 1.500M5.500 5V1M7 5.500 8 1.800M8 7l1.500-2.500" stroke="#2b4be8" strokeWidth="1.400" strokeLinecap="round" />
          <path d="M2 5.500h6.200L7.500 9.500 6 11H4L2.500 9z" fill="#2b4be8" />
        </svg>
        <span className="flex-1" />
        <HotSwap />
        <SaveDisk />
      </div>
      <div className="flex flex-1 pt-[4px] pl-[2px]">
        <div className="mr-1 flex h-[160px] w-[13px] flex-col gap-1">
          <button type="button" aria-label="Macros" className="size-[13px]">
            <svg viewBox="0 0 13 13" aria-hidden="true"><circle cx="6.500" cy="6.500" r="6.500" fill="#8a8a8a" /><path d="M4 9.500A3.800 3.800 0 1 1 9 9.500M6.500 6 9.500 10" fill="none" stroke="#333" strokeWidth="1.300" /></svg>
          </button>
          <button type="button" aria-label="Chain list" className="size-[13px]">
            <svg viewBox="0 0 13 13" aria-hidden="true"><circle cx="6.500" cy="6.500" r="6.500" fill="#8a8a8a" /><path d="M3 4.500h1M3 6.500h1M3 8.500h1M5 4.500h5M5 6.500h5M5 8.500h5" stroke="#333" /></svg>
          </button>
          <button type="button" aria-label="Devices" className="size-[13px]">
            <svg viewBox="0 0 13 13" aria-hidden="true"><circle cx="6.500" cy="6.500" r="6.500" fill="#ffb347" /><path d="M2.500 4h8v5.500h-8zM2.500 5.500h8" fill="none" stroke="#222" /></svg>
          </button>
          <button type="button" aria-label="Auto select" className="mt-auto flex size-[13px] items-center justify-center border border-[#1c1c1c] bg-[#ffb347]">
            <svg width="9" height="7" aria-hidden="true"><path d="M.5 1.500v4M2.500 1.500v4" stroke="#111" /><path d="M4 2.500h1V0l4 3.500L5 7V4.500H4z" fill="#111" /></svg>
          </button>
        </div>
        <PadMap />
        <div className="ml-[2px] grid h-[162px] grid-cols-4 content-start gap-[2px]">
          {PADS.map(p => <Pad key={p} name={p} />)}
        </div>
      </div>
    </section>
  )
}

function ModeTab({ name, active, last, children }) {
  return (
    <button type="button" aria-pressed={active} className={`flex w-full flex-1 flex-col items-center justify-center gap-1 text-[10px] font-normal ${active ? 'text-[#ffb347]' : 'border-r border-[#414141] text-[#8a8a8a]'} ${last ? '' : 'border-b border-b-[#414141]'}`}>
      {children}
      {name}
    </button>
  )
}

function SampleKnob({ id, label, value, at, lit, disabled }) {
  return (
    <div className="relative flex w-[60px] shrink-0 flex-col">
      <span className="leading-4 whitespace-nowrap">{label}</span>
      <Knob size={20} start={180} sweep={270} value={at} lit={lit} className={disabled ? 'opacity-50' : ''} />
      {value && <output aria-label={id} className="absolute top-[27px] right-[10px] h-3 bg-[#414141] leading-3 whitespace-nowrap">{value}</output>}
    </div>
  )
}

function Simpler() {
  return (
    <section aria-label="JingleA" className="flex w-[720px] shrink-0 flex-col border-r-2 border-[#1c1c1c] bg-[#414141] text-[#d0d0d0]">
      <div className="flex h-[15px] items-center gap-[3px] bg-[#c3ecfd] pr-[3px] pl-[3px]">
        <PowerDot label="Simpler on" />
        <button type="button" aria-label="Preview" className="size-[13px]">
          <svg viewBox="0 0 13 13" aria-hidden="true"><circle cx="6.500" cy="6.500" r="6" fill="#555" stroke="#262626" /><path d="M4.500 3 10 6.500 4.500 10z" fill="#e0e0e0" /></svg>
        </button>
        <h2 className="ml-px flex-1 font-semibold text-[#1c1c1c]">JingleA</h2>
        <button type="button" className="h-[15px] w-12 self-start rounded-t bg-[#414141] font-semibold">Sample</button>
        <button type="button" className="h-[13px] w-[52px] self-start rounded bg-[#414141] leading-[13px] font-semibold">Controls</button>
        <HotSwap />
        <SaveDisk />
      </div>
      <div className="mx-[3px] mt-[2px] flex h-[129px] rounded bg-[#1e1e1e]">
        <div className="flex w-[42px] shrink-0 flex-col">
          <ModeTab name="Classic">
            <svg width="11" height="11" fill="none" stroke="currentColor" aria-hidden="true"><path d="M3 7H1.500L.8 5V3L2.500 1h4L8.500 3v3L7 8H5M7 5.500 4.800 8 7 10.500" /></svg>
          </ModeTab>
          <ModeTab name="1-Shot" active>
            <svg width="11" height="11" fill="none" stroke="currentColor" aria-hidden="true"><path d="M1.500 1v9M1.500 5.500H10M7 2.500l3 3-3 3" /></svg>
          </ModeTab>
          <ModeTab name="Slice" last>
            <svg width="11" height="10" stroke="currentColor" aria-hidden="true"><path d="M1.500 0v10M3.500 0v10M5.500 0v10M7.500 0v10M9.500 0v10" /></svg>
          </ModeTab>
        </div>
        <div className="flex min-w-0 flex-1 flex-col pt-1 pr-[3px] pl-[5px]">
          <div className="relative h-[90px] bg-[#3d6c7d]">
            <svg viewBox="0 0 662 90" preserveAspectRatio="none" className="block h-full w-full" aria-hidden="true">
              <path d={JINGLE} fill="#ffb347" />
              <path d="M.5 0v90M661 0v90" stroke="#a9a9a9" />
              <path d="M0 1l10 5-10 5zM662 1l-10 5 10 5z" fill="#8f8f8f" stroke="#333" />
            </svg>
            <div className="absolute inset-x-0 bottom-0 flex h-4 overflow-hidden text-[#c8d4d8]/40" aria-hidden="true">
              {['0:00', '0:02', '0:04', '0:06', '0:08', '0:10', '0:12', '0:14'].map(t => (
                <div key={t} className="flex w-[85px] shrink-0 items-start">
                  <span className="mt-[6px] h-[10px] w-[2px] border-t border-l border-[#c8d4d8]/40" />
                  <span className="w-0 leading-3">{t}</span>
                  {[0, 1, 2].map(n => <i key={n} className="mt-3 ml-[20px] h-1 w-px bg-[#c8d4d8]/40" />)}
                </div>
              ))}
            </div>
          </div>
          <div className="flex flex-1 items-start text-[#8a8a8a]">
            <label className="flex w-[46px] flex-col pt-[3px] pl-px leading-[15px]">
              Gain
              <input defaultValue="0.0 dB" className="w-10 bg-transparent pl-px font-semibold text-[#5bd0f7]" />
            </label>
            <div className="mt-[5px] flex w-[43px] flex-col border border-[#5fd7ff] font-['DejaVu_Sans',sans-serif] text-[8px]">
              <button type="button" className="h-3 bg-[#5fd7ff] text-[#111]">TRIGGER</button>
              <button type="button" className="h-3 text-[#5fd7ff]">GATE</button>
            </div>
            <button type="button" className="mt-3 ml-[11px] h-[11px] w-[38px] bg-[#5fd7ff] font-['DejaVu_Sans',sans-serif] text-[8px] leading-[11px] text-[#111]">SNAP</button>
            <div className="flex-1" />
            <div className="flex flex-col gap-[2px] pt-1 pr-1">
              <div className="flex items-center">
                <button type="button" className="h-[11px] w-[54px] border border-[#ffb347] font-['DejaVu_Sans',sans-serif] text-[8px] leading-[9px] text-[#ffb347]">WARP</button>
                <span className="w-[21px] text-center leading-[13px]">as</span>
                <button type="button" className="h-[13px] w-[53px] rounded-full border border-[#3c3c3c] leading-[11px] font-semibold text-[#ffa93f]">8 Bars</button>
              </div>
              <div className="flex items-center">
                <div className="relative w-[75px]">
                  <select aria-label="Warp mode" className="block h-[13px] w-[54px] appearance-none bg-transparent pl-[2px] leading-[13px]"><option>Beats</option></select>
                  <svg width="5" height="4" className="pointer-events-none absolute top-[5px] left-[46px]" aria-hidden="true"><path d="M0 0h5L2.500 4z" fill="currentColor" /></svg>
                </div>
                <button type="button" className="h-[13px] w-[25px] rounded-full border border-[#3c3c3c] leading-[11px]">:2</button>
                <button type="button" className="ml-[2px] h-[13px] w-[25px] rounded-full border border-[#3c3c3c] leading-[11px]">*2</button>
              </div>
            </div>
          </div>
        </div>
      </div>
      <div className="flex h-[38px] overflow-hidden pl-[5px] font-semibold">
        <label className="mt-1 flex h-[13px] w-12 shrink-0 items-center gap-[6px]">
          <input type="checkbox" className="size-[13px] appearance-none border border-[#1c1c1c] bg-[#555]" />
          Filter
        </label>
        <div className="mt-1 mr-2 flex w-10 shrink-0 flex-col gap-[5px]">
          <Chooser label="Filter type" options={['']} />
          <Chooser label="Filter circuit" options={['']} />
        </div>
        <SampleKnob id="Frequency value" label="Frequency" at={0} disabled />
        <SampleKnob id="Resonance value" label="Res" at={0} disabled />
        <div className="ml-[44px] flex w-[147px] shrink-0 gap-[14px] border-x border-[#383838] pt-1 pl-[18px]">
          <div className="flex w-[43px] flex-col gap-[5px]">
            <label className="flex h-[13px] items-center gap-[5px]">
              <input type="checkbox" className="size-[13px] appearance-none border border-[#1c1c1c] bg-[#555]" />
              LFO
            </label>
            <Chooser label="LFO shape" options={['']} />
          </div>
          <div className="flex w-[52px] flex-col gap-[5px]">
            <div className="flex justify-between">
              <button type="button" className="h-[13px] w-6 border border-[#1c1c1c] bg-[#828282] leading-[11px] font-normal text-[#444]">Hz</button>
              <button type="button" aria-label="Sync" className="flex h-[13px] w-6 items-center justify-center border border-[#1c1c1c] bg-[#555] text-[#757575]">
                <svg width="7" height="9" aria-hidden="true"><path d="M4 0v7M4 1l2 1.500" stroke="currentColor" fill="none" /><circle cx="2.800" cy="7" r="1.700" fill="currentColor" /></svg>
              </button>
            </div>
            <input aria-label="LFO rate" className="h-[13px] w-[52px] border border-[#1c1c1c]" />
          </div>
        </div>
        <div className="flex shrink-0 pl-[9px]">
          <SampleKnob id="Fade in value" label="Fade In" value="0.00 ms" at={0} />
          <SampleKnob id="Fade out value" label="Fade Out" value="0.10 ms" at={0.04} />
          <SampleKnob id="Transpose value" label="Transp" value="0 st" at={0.5} />
          <SampleKnob id="Velocity value" label="Vol < Vel" value="45 %" at={0.45} lit />
          <SampleKnob id="Volume value" label="Volume" value="-12.0 dB" at={0.33} lit />
        </div>
      </div>
    </section>
  )
}

function RackMeters() {
  return (
    <div className="flex w-[11px] shrink-0 justify-center gap-px self-center" aria-hidden="true">
      <span className="h-10 w-[2px] bg-[#262626] pt-1"><i className="block h-px bg-[#444]" /></span>
      <span className="h-10 w-[2px] bg-[#262626] pt-1"><i className="block h-px bg-[#444]" /></span>
    </div>
  )
}

function Limiter() {
  return (
    <section aria-label="Limiter" className="flex h-[188px] w-[115px] shrink-0 flex-col overflow-hidden rounded bg-[#414141] font-semibold text-[#d0d0d0]">
      <div className="flex h-[17px] shrink-0 items-center gap-[3px] bg-[#555] px-[3px]">
        <PowerDot label="Limiter on" />
        <h2 className="flex-1 pl-px">Limiter</h2>
        <HotSwap />
        <SaveDisk />
      </div>
      <div className="flex flex-1 pl-[7px]">
        <div className="flex w-[52px] shrink-0 flex-col pt-[5px]">
          <div className="flex w-12 flex-col items-center">
            <span className="leading-[13px]">Gain</span>
            <Triangle className="text-[#1c1c1c]" />
            <Knob size={26} start={-145} sweep={290} value={0.5} />
            <output className="leading-3 whitespace-nowrap">0.00 dB</output>
          </div>
          <label className="flex flex-col pt-[4px]">
            <span className="leading-[13px]">Lookahead</span>
            <Chooser label="Lookahead" options={['3 ms']} />
          </label>
          <div className="flex w-12 flex-col items-center pt-[11px]">
            <span className="leading-[13px]">Release</span>
            <Knob size={26} start={-145} sweep={290} value={0.83} track="#8a8a8a" needle="#333" className="-mt-px" />
            <output className="-mt-[2px] leading-3">300 ms</output>
            <button type="button" className="mt-px h-[13px] w-12 border border-[#1c1c1c] bg-[#ffb347] leading-[11px] text-[#141414]">Auto</button>
          </div>
        </div>
        <div className="ml-[2px] flex w-[47px] flex-col pt-[5px]">
          <label htmlFor="ceiling" className="leading-[13px]">Ceiling</label>
          <input id="ceiling" defaultValue="-0.30 dB" className="h-[13px] w-[47px] border border-[#1c1c1c] bg-[#2a2a2a] text-center" />
          <button type="button" className="mt-1 h-[13px] w-[47px] border border-[#1c1c1c] bg-[#ffb347] leading-[11px] text-[#141414]">Stereo</button>
          <div className="flex justify-end gap-px pt-[7px] pr-px">
            <span className="mt-[6px] h-[100px] w-2 bg-[#1e1e1e]" />
            <ul className="w-5 text-center leading-[14px]">
              {[0, -6, -12, -18, -24, -30, -36, -42].map(n => <li key={n}>{n}</li>)}
            </ul>
          </div>
        </div>
      </div>
    </section>
  )
}

function DeviceView() {
  return (
    <div className="flex gap-2 px-2 pt-2">
      <div className="h-[196px] w-[200px] shrink-0 rounded border-4 border-[#282828] bg-[#414141]">
        <div className="h-[17px] bg-[#555]" />
      </div>
      <div className="flex h-[196px] min-w-0 flex-1 rounded bg-[#141414] py-1 pr-1">
        <div className="w-[15px] shrink-0 pt-[74px] pl-[6px]"><span className="block h-10 w-0 border-l-2 border-dotted border-[#2a2a2a]" /></div>
        <div className="flex h-[188px] shrink-0 overflow-hidden rounded border-2 border-[#c3ecfd] bg-[#414141]">
          <DrumRack />
          <Simpler />
          <div className="w-[14px] border-t-[15px] border-[#c3ecfd]" />
        </div>
        <RackMeters />
        <Limiter />
        <RackMeters />
        <div className="flex min-w-0 flex-1 items-center justify-center bg-[#414141] font-normal text-[#dcdcdc]">オーディオエフェクトをここへドロップします</div>
      </div>
    </div>
  )
}

function StatusBar() {
  return (
    <footer className="flex gap-2 px-2 pb-2">
      <div className="pt-[9px]">
        <RoundIcon label="Clip view" dark="fill-[#141414]"><path d="M9.500 3.500 15 14H4z" fill="#4a4a4a" /></RoundIcon>
      </div>
      <div className="mt-2 h-[22px] flex-1 rounded border-[3px] border-[#282828] bg-[#414141]" />
      <div className="mt-2 h-[22px] w-[206px] shrink-0 rounded border-[3px] border-[#141414] bg-[#414141]" />
      <div className="-mt-1 flex h-[34px] w-[174px] shrink-0 items-end gap-1 rounded-b bg-[#141414] pr-1 pb-[2px] pl-1 font-semibold text-[#e8e8e8]">
        <span className="leading-4 whitespace-nowrap">2-Drum Rack</span>
        <svg viewBox="0 0 100 16" preserveAspectRatio="none" className="h-4 min-w-0 flex-1" aria-hidden="true">
          <path d="M0 0h100v16H0z" fill="#3c3c3c" />
          <path d="M0 .5h87" stroke="#9cc4d6" />
          <path d="M28 2h59v8H28z" fill="#3d6c7d" />
          <path d="M28 3.500l12 1 5-.5 4-1.500h25v7.500l-25 .5-4-1-5 .5-12-1z" fill="#ffb347" />
          <path d="M28 10h59v3H28z" fill="#1a1a1a" />
          <path d="M32 11.500h8" stroke="#5fd7ff" strokeWidth="1.500" />
          <path d="M74 11.500h10M92 14.500h5M95 5.500h4" stroke="#ffb347" strokeWidth="1.500" />
          <path d="M4 4.500h18M4 8.500h18M4 12.500h18" stroke="#777" strokeDasharray="2 3" />
          <path d="M88.500 0v16" stroke="#141414" strokeWidth="2" />
          <path d="M91 3.500h4M91 7.500h4M91 11.500h4" stroke="#888" strokeDasharray="2 1" />
        </svg>
      </div>
      <div className="pt-[9px]">
        <RoundIcon label="Device view" dark="fill-[#141414]"><path d="M9.500 3.500 15 14H4z" fill="#4a4a4a" /></RoundIcon>
      </div>
    </footer>
  )
}

export default function App() {
  return (
    <div className="min-h-screen bg-white px-14 pt-[38px] pb-[74px] font-[Inter,'Noto_Sans_CJK_JP',sans-serif] text-[10px] font-medium tabular-nums">
      <main className="overflow-hidden rounded-[5px] bg-[#363636] shadow-[0_0_1px_rgba(0,0,0,0.5),0_20px_40px_rgba(0,0,0,0.5)]">
        <TitleBar />
        <Toolbar />
        <Arrangement />
        <DeviceView />
        <StatusBar />
      </main>
    </div>
  )
}
